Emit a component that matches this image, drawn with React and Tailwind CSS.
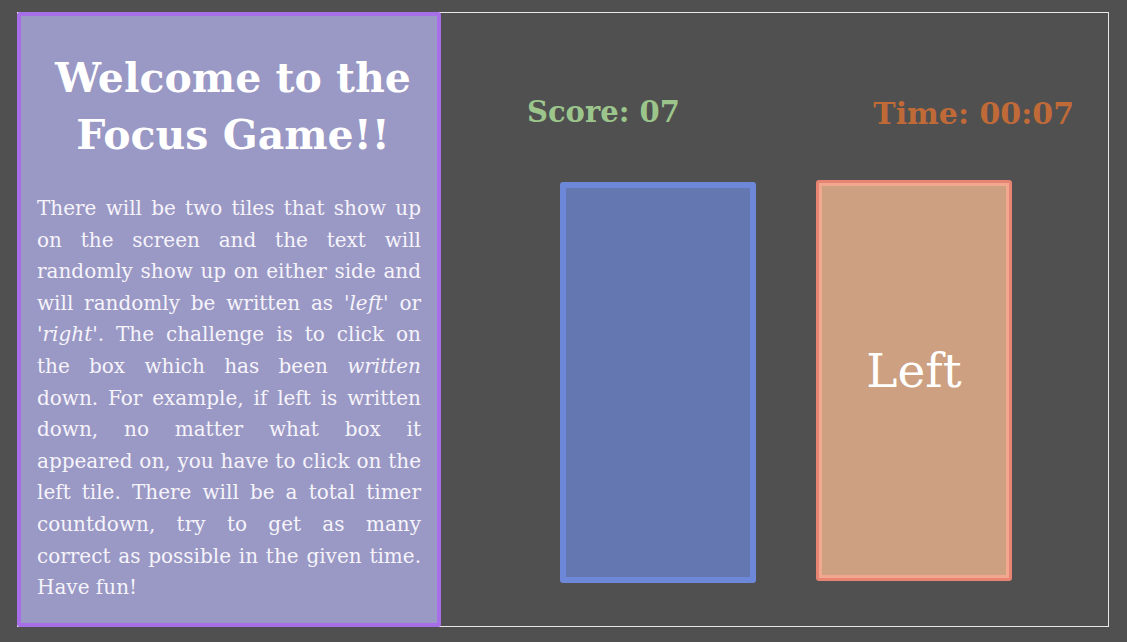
export default function App() {
  const serif = { fontFamily: '"DejaVu Serif", Georgia, serif' };
  return (
    <div className="w-[1127px] h-[642px] bg-[#505050] pl-[17px] pt-[12px]" style={serif}>
      <div className="w-[1092px] h-[615px] border border-[#e8e8e8] flex">
        <div className="w-[424px] h-[615px] -mt-px -ml-px border-4 border-[#a66fe8] bg-[#9a98c4] rounded-[3px] pl-[16px] pr-[16px] pt-[34px]">
          <h1 className="text-white font-bold text-[41px] leading-[57px] text-center pl-[8px]">
            Welcome to the Focus Game!!
          </h1>
          <p className="mt-[29px] text-[#f6f4fb] text-[20px] leading-[31.6px] text-justify">
            There will be two tiles that show up on the screen and the text will randomly show up on either side and will randomly be written as '<i>left</i>' or '<i>right</i>'. The challenge is to click on the box which has been <i>written</i> down. For example, if left is written down, no matter what box it appeared on, you have to click on the left tile. There will be a total timer countdown, try to get as many correct as possible in the given time. Have fun!
          </p>
        </div>
        <div className="flex-1 flex flex-col">
          <div className="flex justify-between items-baseline pl-[86px] pr-[34px] pt-[76px]">
            <span className="text-[#9cc58c] font-bold text-[29px]">Score: 07</span>
            <span className="text-[#c06a38] font-bold text-[30px] translate-y-[2px]">Time: 00:07</span>
          </div>
          <div className="flex items-start gap-[60px] pl-[119px] mt-[45px]">
            <div className="w-[196px] h-[401px] mt-[2px] rounded-[3px] border-[6px] border-[#6d88d9] bg-[#6577b1]" />
            <div className="w-[196px] h-[401px] rounded-[3px] border-[3px] border-[#e88474] bg-[#cca081] shadow-[inset_0_0_0_3px_#f2a78f] flex items-center justify-center">
              <span className="text-white text-[47px] -mt-[18px]">Left</span>
            </div>
          </div>
        </div>
      </div>
    </div>
  );
}
